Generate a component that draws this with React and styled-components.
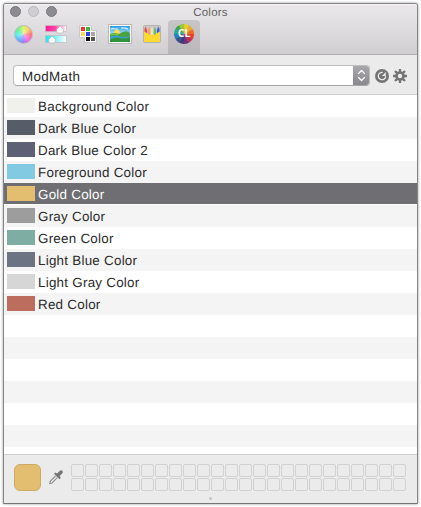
import React from "react";
import styled, { createGlobalStyle } from "styled-components";

const GlobalStyle = createGlobalStyle`
  * { box-sizing: border-box; }
  body {
    margin: 0;
    background: #fff;
    overflow: hidden;
    font-family: "Liberation Sans", Arial, sans-serif;
    text-rendering: geometricPrecision;
  }
`;

const Window = styled.main`
  width: 415px;
  height: 501px;
  margin: 3px;
  border: 1px solid #858585;
  border-top-color: #858387;
  border-bottom-color: #767676;
  border-radius: 3px 3px 1px 1px;
  box-shadow: 0 0 3px rgba(0, 0, 0, 0.4);
  background: #ebebeb;
  display: flex;
  flex-direction: column;
  overflow: hidden;
`;

const Header = styled.header`
  height: 51px;
  flex: none;
  background: linear-gradient(#e9e7ea, #e2e0e3 35%, #d0ced0);
  border-top: 1px solid #f5f4f5;
  border-bottom: 1px solid #b0aeb0;
`;

const TitleBar = styled.div`
  height: 15px;
  display: grid;
  grid-template-columns: 1fr auto 1fr;
  align-items: start;
`;

const Lights = styled.div`
  display: flex;
  gap: 7px;
  padding: 1px 0 0 6px;
`;

const Light = styled.span`
  width: 11px;
  height: 11px;
  border-radius: 50%;
  background: ${(p) => (p.$dim ? "#cfced0" : "#8c8b8f")};
  border: 1px solid ${(p) => (p.$dim ? "#b9b7ba" : "#7a797e")};
`;

const Title = styled.h1`
  margin: 2px 0 0;
  font-size: 11.5px;
  line-height: 13px;
  font-weight: 400;
  letter-spacing: 0.25px;
  color: #626164;
`;

const Tabs = styled.nav`
  height: 34px;
  padding-left: 4px;
  display: flex;
`;

const Tab = styled.button`
  width: 32px;
  height: 34px;
  padding: 0;
  border: 0;
  border-radius: 4px 4px 0 0;
  background: ${(p) => (p.$selected ? "linear-gradient(#c7c5c7, #b9b7b9)" : "none")};

  svg { display: block; }
`;

const Wheel = styled.span`
  display: block;
  width: 19px;
  height: 19px;
  margin: -6px 0 0 6px;
  border-radius: 50%;
  border: 1px solid #bebcbf;
  background:
    radial-gradient(circle, rgba(255, 255, 255, 0.55), rgba(255, 255, 255, 0.05) 75%),
    conic-gradient(from 90deg, #ff5d62, #fa54d7, #8b67ff, #48aaff, #38eee1, #58ef7b, #cdf64c, #ffc153, #ff5d62);
`;

const Toolbar = styled.div`
  height: 40px;
  flex: none;
  padding: 10px 9px 0;
  display: flex;
  border-bottom: 1px solid #cfcfcf;
`;

const Select = styled.div`
  width: 357px;
  height: 21px;
  border: 1px solid #bdbdbd;
  border-bottom-color: #a6a6a6;
  border-radius: 4px;
  background: #fff;
  display: flex;
  justify-content: space-between;
  overflow: hidden;
`;

const SelectText = styled.span`
  padding-left: 8px;
  font-size: 13.4px;
  line-height: 21px;
  letter-spacing: 0.35px;
  color: #282828;
`;

const Stepper = styled.span`
  width: 17px;
  height: 21px;
  margin: -1px -1px 0 0;
  background: linear-gradient(#aaa9ad, #87868b);
`;

const ToolIcon = styled.span`
  width: 14px;
  height: 14px;
  margin: 4px 0 0 ${(p) => p.$gap}px;

  svg { display: block; }
`;

const List = styled.ul`
  height: 359px;
  flex: none;
  margin: 0;
  padding: 0;
  list-style: none;
  overflow: hidden;
  background: #fff;
`;

const Row = styled.li`
  height: 22px;
  padding-left: 3px;
  display: flex;
  gap: 3px;
  background: ${(p) => (p.$striped ? "#f4f4f4" : "#fff")};
  ${(p) => p.$selected && "background: linear-gradient(#6f6e73 21px, #fff 21px);"}
  color: ${(p) => (p.$selected ? "#fff" : "#2b2b2b")};
`;

const Swatch = styled.span`
  width: 28px;
  height: 15px;
  margin-top: 3px;
  background: ${(p) => p.$color};
`;

const Name = styled.span`
  font-size: 13.4px;
  line-height: 23px;
  letter-spacing: 0.25px;
  white-space: nowrap;
`;

const Footer = styled.footer`
  flex: 1;
  border-top: 1px solid #cfcfcf;
  padding: 9px 10px 0;
  display: grid;
  grid-template-columns: 27px 15px auto;
  grid-template-rows: 27px 10px;
  column-gap: 7px;
  justify-content: start;
`;

const Well = styled.span`
  width: 27px;
  height: 27px;
  border-radius: 6px;
  border: 1px solid #cfaa63;
  background: #e3bd70;
`;

const Dropper = styled.span`
  padding-top: 5px;
  svg { display: block; }
`;

const Slots = styled.div`
  padding-left: 1px;
  display: grid;
  grid-template-columns: repeat(24, 13px);
  grid-auto-rows: 13px;
  gap: 1px;
`;

const Slot = styled.span`
  border: 1px solid #d2d2d2;
  border-radius: 2px;
`;

const Handle = styled.span`
  grid-column: 1 / -1;
  width: 3px;
  height: 3px;
  margin: 6px 0 0 195px;
  border-radius: 50%;
  background: #c5c5c5;
`;

const SlidersIcon = () => (
  <svg width="32" height="34" viewBox="0 0 32 34">
    <defs>
      <linearGradient id="pink"><stop stopColor="#ff1593" /><stop offset=".45" stopColor="#ff45a8" /><stop offset="1" stopColor="#fff" /></linearGradient>
      <linearGradient id="cyan"><stop stopColor="#19e4f3" /><stop offset="1" stopColor="#fff" /></linearGradient>
    </defs>
    <rect x="5.5" y="5.5" width="21" height="6" fill="url(#pink)" stroke="#c1bfc1" strokeWidth=".7" />
    <rect x="5.5" y="15.5" width="21" height="7" fill="url(#cyan)" stroke="#bcbfc1" strokeWidth=".7" />
    <path d="M20 6.2 23.3 9.5V11.5Q23.3 13 21.8 13H18.2Q16.7 13 16.7 11.5V9.5Z" fill="#fff" stroke="#aaa" strokeWidth=".6" />
    <path d="M12 16.2 15.3 19.5V21.5Q15.3 23 13.8 23H10.2Q8.7 23 8.7 21.5V19.5Z" fill="#fff" stroke="#aaa" strokeWidth=".6" />
  </svg>
);

const PalettesIcon = () => (
  <svg width="32" height="34" viewBox="0 0 32 34">
    <path d="M7.5 5.5H19.5V10.5H24.5V22.5H12.5V17.5H7.5Z" fill="#fff" stroke="#bcbabc" strokeWidth=".7" />
    <rect x="9" y="7" width="4" height="4" fill="#f5332b" />
    <rect x="14" y="7" width="4" height="4" fill="#31bf3a" />
    <rect x="9" y="12" width="4" height="4" fill="#ffd84b" />
    <rect x="14" y="12" width="4" height="4" fill="#2745f4" />
    <rect x="19" y="12" width="4" height="4" fill="#a6a6a6" />
    <rect x="14" y="17" width="4" height="4" fill="#090909" />
    <rect x="19" y="17" width="4" height="4" fill="#555" />
  </svg>
);

const PictureIcon = () => (
  <svg width="32" height="34" viewBox="0 0 32 34">
    <defs><linearGradient id="sky" x2="0" y2="1"><stop stopColor="#299ee9" /><stop offset=".6" stopColor="#caebf7" /></linearGradient></defs>
    <rect x="4.5" y="4.5" width="23" height="19" fill="#fff" stroke="#b9b9b9" />
    <rect x="6" y="6" width="20" height="16" fill="url(#sky)" />
    <path d="M7 9Q9 8 11 9H14M17 8H21L24 9" stroke="#e7f7fd" strokeWidth="1.2" fill="none" />
    <circle cx="13" cy="12" r="2.6" fill="#ffdd42" />
    <path d="M6 14Q10 12 15 14Q22 9 26 13V22H6Z" fill="#4ba345" />
    <path d="M6 17Q12 14 18 17L26 16.5V18L18 20L6 19Z" fill="#3b9fd0" />
    <path d="M6 19.5Q12 16 18 18.5Q22 19 26 17V22H6Z" fill="#319438" />
    <path d="M7 15Q10 13 14 15" stroke="#92cb46" strokeWidth="1.2" fill="none" />
  </svg>
);

const CrayonsIcon = () => (
  <svg width="32" height="34" viewBox="0 0 32 34">
    <rect x="7.5" y="5.5" width="17" height="17" rx="1" fill="#c8c8c8" stroke="#b4b3b4" />
    <path d="M8.5 13V9L9.8 6.5 11 10V14Z" fill="#ea4940" />
    <path d="M11.7 16V10L13 6.8 14.3 10V16Z" fill="#f0a070" />
    <path d="M14.7 16V10L16 6.8 17.3 10V16Z" fill="#f0e6a8" />
    <path d="M17.7 16V10L19 6.8 20.3 10V16Z" fill="#65bd77" />
    <path d="M21 14V10L22.2 6.5 23.5 9V13Z" fill="#3d59e2" />
    <path d="M8 11.5 10.5 12.7Q12 15 16 15Q20 15 21.5 12.7L24 11.5V22H8Z" fill="#ffd92f" />
  </svg>
);

const wedges = ["#e8ce31", "#edaa2b", "#ed6f27", "#e73d2b", "#c52e54", "#732f7c", "#433979", "#315592", "#267fb8", "#24a79c", "#38a648", "#9bc53b"];

const ColorListIcon = () => (
  <svg width="32" height="34" viewBox="0 0 32 34">
    {wedges.map((color, i) => {
      const a = (i * 30 - 90) * Math.PI / 180;
      const b = a + Math.PI / 6 + 0.02;
      return <path key={color} fill={color} d={`M16 14L${16 + 10 * Math.cos(a)} ${14 + 10 * Math.sin(a)}A10 10 0 0 1 ${16 + 10 * Math.cos(b)} ${14 + 10 * Math.sin(b)}Z`} />;
    })}
    <text x="16" y="17.3" textAnchor="middle" fontFamily="Open Sans, Liberation Sans, sans-serif" fontWeight="700" fontSize="10.5" fill="#fff">CL</text>
  </svg>
);

const ArrowsIcon = () => (
  <svg width="17" height="21" viewBox="0 0 17 21" fill="none" stroke="#fff" strokeWidth="1.3" strokeLinecap="round" strokeLinejoin="round">
    <path d="M5.5 8.5 8.5 5.5 11.5 8.5M5.5 12.5 8.5 15.5 11.5 12.5" />
  </svg>
);

const RefreshIcon = () => (
  <svg width="14" height="14" viewBox="0 0 14 14">
    <circle cx="7" cy="7" r="7" fill="#747474" />
    <path d="M7.8 3.4A3.7 3.7 0 1 0 10.7 7.3" fill="none" stroke="#ebebeb" strokeWidth="1.3" />
    <path d="M10.8 3V6.9H6.9Z" fill="#ebebeb" />
  </svg>
);

const GearIcon = () => (
  <svg width="14" height="14" viewBox="0 0 14 14">
    <g stroke="#747474" strokeWidth="2.3">
      <path d="M7 0V3.5M7 10.5V14M0 7H3.5M10.5 7H14M2 2 4.6 4.6M9.4 9.4 12 12M12 2 9.4 4.6M4.6 9.4 2 12" />
    </g>
    <circle cx="7" cy="7" r="3.5" fill="none" stroke="#747474" strokeWidth="2.6" />
  </svg>
);

const DropperIcon = () => (
  <svg width="16" height="16" viewBox="0 0 16 16">
    <path d="M7.5 7 2.2 12.3 1.8 14.5 4 14 9.2 8.7" fill="#f3f3f3" stroke="#8b8b8b" strokeWidth="1.1" />
    <path d="M6 4.8 7.4 3.4 9.2 4.6 11.6 2.1Q13.1.6 14.4 1.8 15.6 3.2 14.1 4.6L11.6 7 12.8 8.7 11.4 10.2Z" fill="#747474" />
  </svg>
);

const tabs = [Wheel, SlidersIcon, PalettesIcon, PictureIcon, CrayonsIcon, ColorListIcon];

const colors = [
  ["Background Color", "#f0f1ec"],
  ["Dark Blue Color", "#565d69"],
  ["Dark Blue Color 2", "#5c6173"],
  ["Foreground Color", "#82cae2"],
  ["Gold Color", "#e3bd70"],
  ["Gray Color", "#9d9d9d"],
  ["Green Color", "#7eaea3"],
  ["Light Blue Color", "#6c7382"],
  ["Light Gray Color", "#d6d6d6"],
  ["Red Color", "#bd6d5e"],
];

const rows = Array.from({ length: 17 }, (_, i) => colors[i]);

export default function App() {
  return (
    <>
      <GlobalStyle />
      <Window>
        <Header>
          <TitleBar>
            <Lights><Light /><Light $dim /><Light /></Lights>
            <Title>Colors</Title>
          </TitleBar>
          <Tabs>
            {tabs.map((Icon, i) => <Tab key={i} $selected={i === 5}><Icon /></Tab>)}
          </Tabs>
        </Header>
        <Toolbar>
          <Select>
            <SelectText>ModMath</SelectText>
            <Stepper><ArrowsIcon /></Stepper>
          </Select>
          <ToolIcon $gap={5}><RefreshIcon /></ToolIcon>
          <ToolIcon $gap={4}><GearIcon /></ToolIcon>
        </Toolbar>
        <List>
          {rows.map((row, i) => (
            <Row key={i} $striped={i % 2 === 1} $selected={i === 4}>
              {row && <><Swatch $color={row[1]} /><Name>{row[0]}</Name></>}
            </Row>
          ))}
        </List>
        <Footer>
          <Well />
          <Dropper><DropperIcon /></Dropper>
          <Slots>{Array.from({ length: 48 }, (_, i) => <Slot key={i} />)}</Slots>
          <Handle />
        </Footer>
      </Window>
    </>
  );
}
